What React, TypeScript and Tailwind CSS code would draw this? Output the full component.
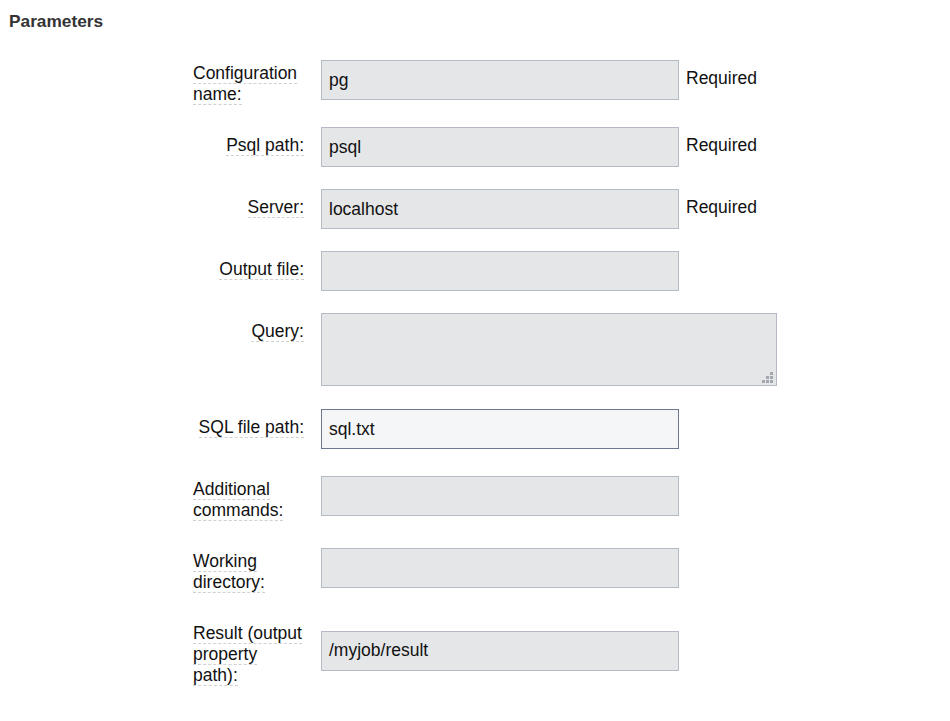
import React from "react";

type Row = {
  label: string;
  value?: string;
  required?: boolean;
  kind?: "input" | "textarea" | "focus";
};

const rows: Row[] = [
  { label: "Configuration name:", value: "pg", required: true },
  { label: "Psql path:", value: "psql", required: true },
  { label: "Server:", value: "localhost", required: true },
  { label: "Output file:", value: "" },
  { label: "Query:", value: "", kind: "textarea" },
  { label: "SQL file path:", value: "sql.txt", kind: "focus" },
  { label: "Additional commands:", value: "" },
  { label: "Working directory:", value: "" },
  { label: "Result (output property path):", value: "/myjob/result" },
];

function ResizeDots() {
  const dots: [number, number][] = [
    [8, 0],
    [4, 4],
    [8, 4],
    [0, 8],
    [4, 8],
    [8, 8],
  ];
  return (
    <svg
      width="11"
      height="11"
      viewBox="0 0 11 11"
      className="absolute right-[3px] bottom-[2px]"
    >
      {dots.map(([x, y], i) => (
        <rect key={i} x={x} y={y} width="3" height="3" fill="#a3a7ae" />
      ))}
    </svg>
  );
}

function Field({ row }: { row: Row }) {
  if (row.kind === "textarea") {
    return (
      <div className="relative w-[456px] h-[73px] bg-[#e5e6e8] border border-[#b5bac5]">
        <ResizeDots />
      </div>
    );
  }
  const focus = row.kind === "focus";
  return (
    <div className="flex items-center">
      <div
        className={
          focus
            ? "w-[358px] h-[40px] bg-[#f5f6f8] border border-[#6e7691] flex items-center pl-[7px] text-[17.5px] text-[#111]"
            : "w-[358px] h-[40px] bg-[#e5e6e8] border border-[#b5bac5] flex items-center pl-[7px] text-[17.5px] text-[#111]"
        }
      >
        {row.value}
      </div>
      {row.required && (
        <span className="ml-[7px] text-[17.5px] text-[#111] leading-[21px] -mt-[4px]">
          Required
        </span>
      )}
    </div>
  );
}

export default function App() {
  return (
    <div
      className="w-[950px] h-[721px] bg-white pt-[11px] pl-[9px]"
      style={{ fontFamily: '"Liberation Sans", Arial, sans-serif' }}
    >
      <div className="text-[17.3px] font-bold leading-[21px] text-[#333]">
        Parameters
      </div>
      <div className="mt-[23px] ml-[184px] flex flex-col gap-[22px]">
        {rows.map((row) => (
          <div
            key={row.label}
            className={row.kind === "focus" ? "flex mt-[1px]" : "flex"}
          >
            <div className="w-[111px] shrink-0 pt-[8px] text-right text-[17.5px] leading-[21px] text-[#111] self-start">
              <div className="inline-block text-left">
                <span className="border-b border-dashed border-[#d0d0d0]">
                  {row.label}
                </span>
              </div>
            </div>
            <div className="ml-[17px] flex items-center">
              <Field row={row} />
            </div>
          </div>
        ))}
      </div>
    </div>
  );
}
